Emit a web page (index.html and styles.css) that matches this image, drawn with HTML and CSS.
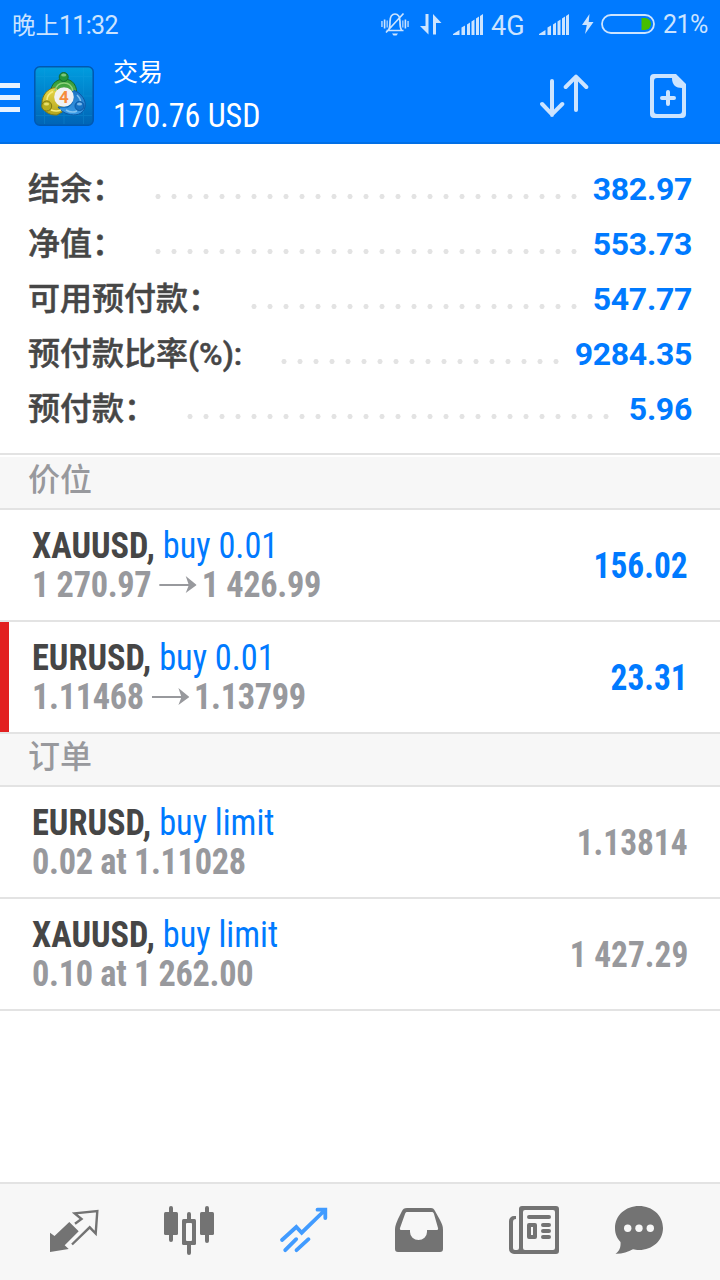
FILE: index.html
```html
<!DOCTYPE html>
<html lang="zh-CN">
<head>
    <meta charset="UTF-8">
    <meta name="viewport" content="width=device-width, initial-scale=1.0">
    <title>交易</title>
    <link rel="stylesheet" href="styles.css">
</head>
<body>

<div class="top">
    <div class="status-bar">
        <span class="time">晚上<span class="clock">11:32</span></span>
        <div class="status-icons">
            <svg class="mute" width="28" height="24" viewBox="0 0 28 24">
                <path d="M5.500 18.500h17M7.500 18c1.500-2 1.500-4 1.500-8.500 0-4.500 2-7.500 5-7.500s5 3 5 7.500c0 4.500 0 6.500 1.500 8.500M5 20.500L22.500 1.500" fill="none" stroke="#cce4ff" stroke-width="1.700"/>
                <path d="M11 21.500h6l-1.500 2h-3zM.300 9h1.300v6H.300zM2.800 7.500h1.600v9H2.800zM23.600 7.500h1.600v9h-1.600zM26.400 9h1.300v6h-1.300zM5.600 8.500h1.100v7H5.600zM21.300 8.500h1.100v7h-1.100z" fill="#cce4ff"/>
            </svg>
            <svg class="data" width="22" height="21" viewBox="0 0 22 21">
                <path d="M5.500 0h3v20.500L0 12h5.500zM13 20.500h3V9h5.500L13 0z" fill="#cce4ff"/>
            </svg>
            <svg class="signal" width="30" height="21" viewBox="0 0 30 21">
                <path d="M0 21v-1l6.500-4v5zM8.500 13.500l3.500-2V21H8.500zM14 10.500l3-2V21h-3zM18.500 7.500l3-2V21h-3zM23 4.500l3-2V21h-3zM27 2l3-2v21h-3z" fill="#cce4ff"/>
            </svg>
            <span class="network">4G</span>
            <svg class="signal second" width="30" height="21" viewBox="0 0 30 21">
                <path d="M0 21v-1l6.500-4v5zM8.500 13.500l3.500-2V21H8.500zM14 10.500l3-2V21h-3zM18.500 7.500l3-2V21h-3zM23 4.500l3-2V21h-3zM27 2l3-2v21h-3z" fill="#cce4ff"/>
            </svg>
            <svg class="bolt" width="12" height="20" viewBox="0 0 12 20">
                <path d="M7.500 0L0 11h4.800L3 20l8.500-12H6.700z" fill="#cce4ff"/>
            </svg>
            <svg class="battery" width="54" height="20" viewBox="0 0 54 20">
                <rect x="1" y="1" width="52" height="18" rx="9" fill="none" stroke="#cce4ff" stroke-width="1.800"/>
                <path d="M40.500 4h3.500a6 6 0 0 1 0 12h-3.500z" fill="#46be00"/>
            </svg>
            <span class="percent">21%</span>
        </div>
    </div>
    <div class="header">
        <div class="menu"><i></i><i></i><i></i></div>
        <svg class="logo" width="60" height="60" viewBox="0 0 60 60">
            <defs>
                <linearGradient id="bg" x1="0" y1="0" x2="0" y2="1">
                    <stop offset="0" stop-color="#009ddf"/>
                    <stop offset="1" stop-color="#0064b6"/>
                </linearGradient>
                <linearGradient id="green" x1="0" y1="0" x2="0" y2="1">
                    <stop offset="0" stop-color="#2d9b35"/>
                    <stop offset="1" stop-color="#6ab552"/>
                </linearGradient>
                <linearGradient id="yellow" x1="0" y1="0" x2="0" y2="1">
                    <stop offset="0" stop-color="#ead84a"/>
                    <stop offset="1" stop-color="#b3a51c"/>
                </linearGradient>
                <linearGradient id="blue" x1="0" y1="0" x2="0" y2="1">
                    <stop offset="0" stop-color="#1c74c4"/>
                    <stop offset="1" stop-color="#3a9be6"/>
                </linearGradient>
            </defs>
            <rect x=".800" y=".800" width="58.400" height="58.400" rx="5" fill="url(#bg)" stroke="#0058b0" stroke-width="1.500"/>
            <path d="M10.500 2v56M49.500 2v56M2 10.500h56M2 49.500h56M30 2v56M2 30h56" stroke="#1aa0e0" stroke-width="1" opacity=".25"/>
            <path d="M17 31c-2-11 4-18 13-18s14 7 12.500 18l-6-3c-1-3-3-6-6.500-6s-6 3-7 6z" fill="url(#green)" stroke="#176b2b"/>
            <path d="M22 21.500C13 22 8 30 8 37c0 8 7 12.500 15 12l10-6-10-8c-2-4-1-8 1-11z" fill="url(#yellow)" stroke="#807912"/>
            <path d="M39 24c9 3 13.500 11 12 17-2 8-10 9-17 7-4-1-8-4-10-7h10c5-3 6-8 4-13z" fill="url(#blue)" stroke="#0b58a6"/>
            <path d="M21 25c1-5 4-8 9-8s8 3 9 8" fill="none" stroke="#8fd07a" stroke-width="1.500"/>
            <path d="M13 34c0-4 3-7 6-8.500M17 44c4 1.500 7 1.500 10 0" fill="none" stroke="#f6ec80" stroke-width="1.500"/>
            <path d="M43 29c3 3 4 5 3.500 8M32 44c4 2.500 8 2.500 11 1" fill="none" stroke="#83c3f0" stroke-width="1.500"/>
            <circle cx="29.700" cy="11" r="4.500" fill="#23953a" stroke="#176b2b"/>
            <ellipse cx="29.700" cy="9" rx="2.600" ry="1.500" fill="#7cc67c"/>
            <circle cx="12.700" cy="40" r="5" fill="#b5ad20" stroke="#807912"/>
            <ellipse cx="12.500" cy="38" rx="2.600" ry="1.500" fill="#e9e06a"/>
            <circle cx="45.500" cy="40" r="4.500" fill="#1572c4" stroke="#0b58a6"/>
            <ellipse cx="45.500" cy="38" rx="2.600" ry="1.500" fill="#7ab8ea"/>
            <circle cx="30" cy="31" r="9.800" fill="#f1f1f3"/>
            <text class="logo-num" x="30" y="37">4</text>
        </svg>
        <div class="title">
            <div class="name">交易</div>
            <div class="total">170.76 USD</div>
        </div>
        <svg class="sort" width="50" height="44" viewBox="0 0 50 44">
            <path d="M12 7v34M2.100 30L12 40.300 22.300 30M36 36V3M25.700 13L36 2.700 46.300 13" fill="none" stroke="#cce4ff" stroke-width="4" stroke-linecap="round" stroke-linejoin="round"/>
        </svg>
        <svg class="new-order" width="36" height="44" viewBox="0 0 36 44">
            <path fill-rule="evenodd" d="M4 0h22l10 10v30a4 4 0 0 1-4 4H4a4 4 0 0 1-4-4V4a4 4 0 0 1 4-4zM7 4a3 3 0 0 0-3 3v30a3 3 0 0 0 3 3h22a3 3 0 0 0 3-3V14c-6 0-10-3-10-10z" fill="#cce4ff"/>
            <path d="M18 18v12M12 24h12" stroke="#cce4ff" stroke-width="4" stroke-linecap="round"/>
        </svg>
    </div>
</div>

<div class="summary">
    <div class="line"><span class="label">结余：</span><span class="dots"></span><span class="value">382.97</span></div>
    <div class="line"><span class="label">净值：</span><span class="dots"></span><span class="value">553.73</span></div>
    <div class="line"><span class="label">可用预付款：</span><span class="dots"></span><span class="value">547.77</span></div>
    <div class="line"><span class="label">预付款比率<span class="ratio">(%):</span></span><span class="dots"></span><span class="value">9284.35</span></div>
    <div class="line"><span class="label">预付款：</span><span class="dots"></span><span class="value">5.96</span></div>
</div>

<div class="section">价位</div>
<div class="row">
    <div class="info">
        <div class="symbol">XAUUSD, <span class="type">buy 0.01</span></div>
        <div class="price">1 270.97<svg class="arrow" width="41" height="18" viewBox="0 0 41 18"><path d="M0 8h32L29 0l12 9-12 8 3-7H0z" fill="#98999d"/></svg>1 426.99</div>
    </div>
    <div class="profit">156.02</div>
</div>
<div class="row marked">
    <div class="info">
        <div class="symbol">EURUSD, <span class="type">buy 0.01</span></div>
        <div class="price">1.11468<svg class="arrow" width="41" height="18" viewBox="0 0 41 18"><path d="M0 8h32L29 0l12 9-12 8 3-7H0z" fill="#98999d"/></svg>1.13799</div>
    </div>
    <div class="profit">23.31</div>
</div>

<div class="section">订单</div>
<div class="row">
    <div class="info">
        <div class="symbol">EURUSD, <span class="type">buy limit</span></div>
        <div class="price">0.02 at 1.11028</div>
    </div>
    <div class="profit pending">1.13814</div>
</div>
<div class="row">
    <div class="info">
        <div class="symbol">XAUUSD, <span class="type">buy limit</span></div>
        <div class="price">0.10 at 1 262.00</div>
    </div>
    <div class="profit pending">1 427.29</div>
</div>

<div class="tabs">
    <svg width="50" height="50" viewBox="0 0 50 50">
        <path d="M1 26.700l4.500 3.300L20.300 16l9.400 9.300-14 14 4 3.700L1 46z" fill="#737373"/>
        <path d="M26 17.700l6.500-4.700-6.800-5.700 22.600-2.300-1.600 22.500-6-6.200L23 38.500" fill="none" stroke="#737373" stroke-width="2.400"/>
    </svg>
    <svg width="50" height="50" viewBox="0 0 50 50">
        <path d="M7 2v32M25 8v39M43 2v33" stroke="#737373" stroke-width="4" stroke-linecap="round"/>
        <rect y="6" width="14" height="23" rx="1.500" fill="#737373"/>
        <rect x="36" y="6" width="14" height="23" rx="1.500" fill="#737373"/>
        <rect x="18" y="13" width="14" height="26" rx="1.500" fill="#737373"/>
        <rect x="22" y="17" width="6" height="18" rx="1" fill="#f7f7f7"/>
    </svg>
    <svg width="50" height="50" viewBox="0 0 50 50">
        <path d="M3 34L17.300 21l5.400 5.700L46 4M38.500 3.700h7.800V12M6.200 44.200l11-11M17.500 44.200l12-11" fill="none" stroke="#419bff" stroke-width="3.800" stroke-linecap="round"/>
    </svg>
    <svg width="50" height="50" viewBox="0 0 50 50">
        <path fill-rule="evenodd" d="M13 2h24c2 0 3 1 4 3l5 9c2 4 3 6 3 10v19a3 3 0 0 1-3 3H4a3 3 0 0 1-3-3V24c0-4 1-6 3-11l4-8c1-2 2-3 5-3zM13.500 6c-1.500 0-2 .5-2.500 2L6 22c-.3 1.300 0 2 1 2h9v2a8.500 8 0 0 0 17 0v-2h10c1 0 1.300-.7 1-2L40 8c-.5-1.500-1-2-2.500-2z" fill="#737373"/>
    </svg>
    <svg width="50" height="50" viewBox="0 0 50 50">
        <path fill-rule="evenodd" d="M13 0h34a3 3 0 0 1 3 3v42a3 3 0 0 1-3 3H5a5 5 0 0 1-5-5V15a5 5 0 0 1 5-5h2v3c-2 0-3 1-3 3v26a2 2 0 0 0 2 2h2a2 2 0 0 0 2-2V3a3 3 0 0 1 3-3zM16 4a2 2 0 0 0-2 2v36a2 2 0 0 0 2 2h28a2 2 0 0 0 2-2V6a2 2 0 0 0-2-2z" fill="#737373"/>
        <path d="M20 11h20M34 19h6M34 25h6M34 31h6" stroke="#737373" stroke-width="4" stroke-linecap="round"/>
        <rect x="20" y="19" width="6" height="12" fill="none" stroke="#737373" stroke-width="4" stroke-linejoin="round"/>
    </svg>
    <svg class="chat" width="50" height="50" viewBox="0 0 50 50">
        <path d="M25 0c13.500 0 24 9.500 24 22S38.500 44 25 44c-2.500 0-4-.3-6-.8C14 46 8 48 1.500 47.800 5.500 45 7 41 6.500 36 3 32 1 28 1 22 1 9.500 11.500 0 25 0z" fill="#737373"/>
        <g fill="#f7f7f7"><circle cx="13.700" cy="22.300" r="3.700"/><circle cx="25" cy="22.300" r="3.700"/><circle cx="36.300" cy="22.300" r="3.700"/></g>
    </svg>
</div>

</body>
</html>
```
FILE: styles.css
```css
* {
    box-sizing: border-box;
}
body {
    display: flex;
    flex-direction: column;
    width: 720px;
    height: 1280px;
    margin: 0;
    overflow: hidden;
    background-color: #fff;
    font-family: Roboto, "Noto Sans CJK SC", sans-serif;
}
svg {
    display: block;
    flex-shrink: 0;
}
.top {
    height: 144px;
    background-color: #007aff;
    border-bottom: 2px solid #006fe6;
}
.status-bar {
    display: flex;
    justify-content: space-between;
    align-items: center;
    height: 48px;
    padding: 0 12px;
    color: #cce4ff;
    font-size: 25px;
    white-space: nowrap;
}
.time {
    padding-bottom: 1px;
    font-size: 23.5px;
}
.clock {
    font-size: 25px;
    letter-spacing: -0.7px;
}
.status-icons {
    display: flex;
    align-items: center;
}
.data {
    margin-left: 11px;
}
.signal {
    margin-left: 11px;
}
.second {
    margin-left: 10px;
}
.network {
    width: 38px;
    margin-left: 8px;
    padding-top: 4px;
    font-size: 27px;
    line-height: 30px;
}
.bolt {
    margin-left: 13px;
}
.battery {
    margin-left: 7px;
}
.percent {
    width: 45px;
    margin-left: 8px;
    padding-top: 1px;
    letter-spacing: -0.5px;
}
.header {
    display: flex;
    height: 94px;
    padding-right: 34px;
}
.menu {
    display: flex;
    flex-direction: column;
    gap: 7px;
    width: 20px;
    padding-top: 35px;
}
.menu i {
    height: 5px;
    background-color: #e8f3ff;
}
.logo {
    margin: 18px 0 0 14px;
}
.logo-num {
    font: bold 17px Roboto, sans-serif;
    fill: #f58b3c;
    text-anchor: middle;
}
.title {
    flex: 1;
    padding: 9px 0 0 19px;
    color: #fff;
}
.name {
    height: 31px;
    font-size: 25px;
    line-height: 32px;
}
.total {
    font-size: 34px;
    line-height: 54px;
    font-family: "Roboto Condensed", Roboto, sans-serif;
    font-stretch: 75%;
    transform: scaleX(0.94);
    transform-origin: left;
}
.sort {
    margin-top: 26px;
}
.new-order {
    margin: 26px 0 0 60px;
}
.summary {
    position: relative;
    height: 313px;
    padding: 18px 28px 0;
}
.summary::after {
    content: "";
    position: absolute;
    left: 0;
    right: 0;
    bottom: 2px;
    height: 2px;
    background-color: #e3e3e3;
}
.line {
    display: flex;
    align-items: center;
    height: 55px;
    font-size: 32px;
    line-height: 55px;
    white-space: nowrap;
}
.label {
    color: #464646;
    font-weight: 500;
    -webkit-text-stroke: 0.5px #464646;
}
.ratio {
    margin-right: 8px;
}
.dots {
    flex: 1;
    height: 5px;
    margin: 14px 10px 0 26px;
    background: radial-gradient(circle, #e3e3e3 2.3px, transparent 2.8px) 0 0 / 16px 5px repeat-x;
}
.value {
    color: #007aff;
    font-weight: bold;
    letter-spacing: -0.3px;
}
.section {
    height: 53px;
    padding-left: 28px;
    background-color: #f7f7f7;
    border-bottom: 2px solid #e3e3e3;
    color: #98999d;
    font-size: 32px;
    font-weight: 500;
    line-height: 47px;
}
.row {
    display: flex;
    justify-content: space-between;
    align-items: center;
    height: 112px;
    padding: 0 32px;
    border-bottom: 2px solid #e3e3e3;
    font-family: "Roboto Condensed", Roboto, sans-serif;
    font-stretch: 75%;
    font-size: 37.5px;
    font-weight: bold;
    line-height: 39px;
    white-space: nowrap;
}
.marked {
    box-shadow: inset 9px 0 #e21f1f;
}
.info {
    transform: scaleX(0.915);
    transform-origin: left;
}
.symbol {
    color: #464646;
}
.type {
    color: #007aff;
    font-weight: normal;
}
.price {
    display: flex;
    align-items: center;
    color: #98999d;
    letter-spacing: -0.35px;
}
.arrow {
    margin: 0 5px 0 9px;
}
.profit {
    color: #007aff;
    transform: scaleX(0.89);
    transform-origin: right;
}
.pending {
    color: #98999d;
}
.tabs {
    display: flex;
    gap: 65px;
    height: 98px;
    margin-top: auto;
    padding: 22px 49px 0;
    background-color: #f7f7f7;
    border-top: 2px solid #e3e3e3;
}
.chat {
    margin-left: -10px;
}
```
